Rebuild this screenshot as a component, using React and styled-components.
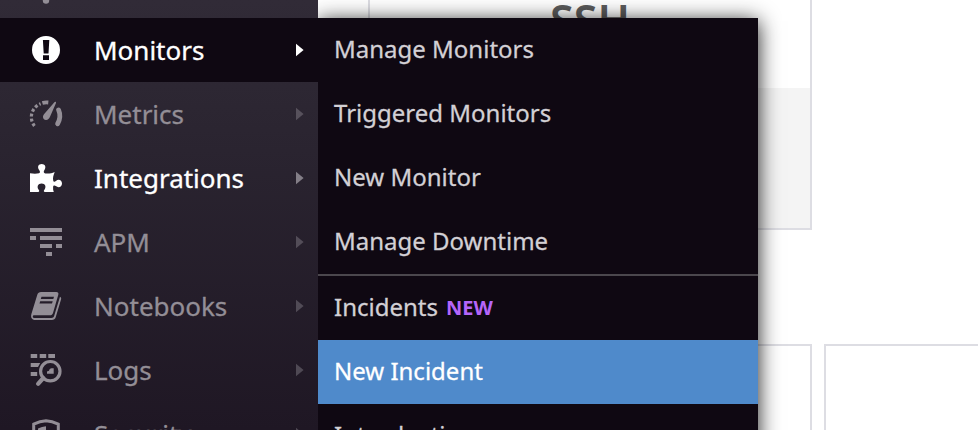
import React from "react";
import styled, { createGlobalStyle, css } from "styled-components";

const GlobalStyle = createGlobalStyle`
  *, *::before, *::after { box-sizing: border-box; }
  body { margin: 0; background: #fff; font-family: "Noto Sans", sans-serif; overflow: hidden; }
`;

const Page = styled.div`
  display: flex;
  height: 430px;
  overflow: hidden;
  position: relative;
`;

const Sidebar = styled.nav`
  position: relative;
  z-index: 3;
  width: 318px;
  flex: none;
  display: flex;
  flex-direction: column;
  justify-content: flex-start;
  overflow: hidden;
  background: linear-gradient(#312b37, #2a2430 35%, #1f1724);
`;

const NavItem = styled.a`
  flex: none;
  height: 64px;
  padding: 0 14px 0 30px;
  display: flex;
  align-items: center;
  font-size: 26px;
  line-height: 36px;
  color: ${(p) => (p.$bright ? "#fff" : "#938e96")};
  background: ${(p) => (p.$active ? "#0f0812" : "transparent")};
  ${(p) => p.$first && css`margin-top: -46px;`}
`;

const NavIcon = styled.svg`
  width: 32px;
  height: 32px;
  flex: none;
  margin-right: 32px;
  fill: currentColor;
  overflow: visible;
`;

const NavLabel = styled.span`
  flex: 1;
  white-space: nowrap;
  -webkit-text-stroke: 0.3px currentColor;
`;

const Arrow = styled.svg`
  width: 8px;
  height: 14px;
  fill: ${(p) => p.$tone};
`;

const Submenu = styled.div`
  position: absolute;
  z-index: 2;
  left: 318px;
  top: 18px;
  width: 440px;
  height: 480px;
  background: #0f0812;
  box-shadow: 0 3px 20px rgba(0, 0, 0, 0.9);
`;

const SubItem = styled.a`
  height: 64px;
  padding: 0 16px 2px;
  display: flex;
  align-items: center;
  gap: 8px;
  font-size: 24px;
  line-height: 34px;
  white-space: nowrap;
  -webkit-text-stroke: 0.27px currentColor;
  color: ${(p) => (p.$selected ? "#fff" : "#d3d0d5")};
  background: ${(p) => (p.$selected ? "#4f8acb" : "transparent")};
`;

const Divider = styled.div`
  height: 2px;
  background: #4b474d;
`;

const NewTag = styled.span`
  font-size: 20px;
  font-weight: 700;
  color: #b565fa;
  padding-top: 2px;
  -webkit-text-stroke: 0;
`;

const Content = styled.main`
  flex: none;
  width: 960px;
  padding-left: 50px;
  display: flex;
  flex-direction: column;
  gap: 114px;
`;

const CardRow = styled.div`
  display: flex;
  gap: 12px;
`;

const Card = styled.section`
  width: 444px;
  height: 230px;
  border: 2px solid #dddde3;
  ${(p) => p.$cutTop && css`border-top: 0;`}
`;

const CardTitle = styled.h2`
  margin: 0;
  height: 88px;
  font-size: 43px;
  line-height: 39px;
  font-weight: 600;
  text-align: center;
  color: #5c5c5c;
`;

const CardBody = styled.div`
  height: 140px;
  background: #f4f4f4;
`;

const ICONS = {
  top: <circle cx="16" cy="30.500" r="3.200" />,
  monitors: (
    <path
      fillRule="evenodd"
      d="M16 2a14 14 0 1 0 0 28a14 14 0 1 0 0-28ZM12.900 6h6.400l-.8 13.500h-4.800ZM13 21.200h6V26h-6Z"
    />
  ),
  metrics: (
    <>
      <path d="M24.400 4.200C24.900 3.200 26.400 3.700 26 4.900L20 18.800c-.8 2-2.300 3.300-4.200 3.100-2.300-.2-3.500-2.600-2.400-4.700.2-.5.600-.900 1-1.400Z" />
      <path d="M28.600 11.900c1.800 4.300 1.700 9.200-1 13.900" fill="none" stroke="currentColor" strokeWidth="4.800" strokeLinecap="round" />
      <path d="M4.400 27.900A14.200 14.200 0 0 1 10.600 5.800" fill="none" stroke="currentColor" strokeWidth="3.200" strokeDasharray="2.900 2.100" />
      <path d="M12.400 5c2-.6 4-.7 5.900-.5" fill="none" stroke="currentColor" strokeWidth="3.800" />
    </>
  ),
  integrations: (
    <path
      transform="translate(0 2)"
      d="M0 9.300C3.400 9.900 6.700 9.900 9 9.300c1.300-.4 1.200-1.800.3-3C6.800 2.800 8.600 0 11.700 0s5 2.800 2.600 6.300c-1 1.500-.6 2.800 1 3.100 2.700.5 6.200.1 9.400-1.300-1.400 3.500-2 5.900-1.500 8.300.3 1.500 1.500 1.600 2.700.5 2.700-2.300 6.100-.8 6.100 2.600s-3.500 5-6.200 2.600c-1.200-1-2.500-.7-2.700.8-.2 1.800.1 3.500.7 5.100H15c-1.400 0-1.500-1.100-.6-2.300 2.100-2.900 1-6.300-2.800-6.300s-5 3.500-2.900 6.400c.9 1.200.6 2.200-.6 2.200H0Z"
    />
  ),
  apm: (
    <path d="M0 2h32v4H0ZM0 10h6v4H0ZM10 10h22v4H10ZM10 18h12v4H10ZM26 18h6v4h-6ZM16 26h6v4h-6Z" />
  ),
  notebooks: (
    <path
      fillRule="evenodd"
      d="M11 2h15.300c1.700 0 2.500 1 2 2.700L23 23c-.5 1.500-1.500 2.300-3.100 2.300H4.400c-1 0-1.600.4-1.600 1.200 0 1 .8 1.500 2 1.500h16.500c1.500 0 2.500-.7 2.900-2.200L30 6.700c1 .5 1.400 1.400 1.100 2.600l-5.400 18c-.6 1.900-1.900 2.700-3.800 2.700H5.300C1.900 30 .4 27.500 1.400 24L7.300 4.700C7.900 2.900 9.200 2 11 2ZM11.500 6.700l-.7 2.200h12.500l.7-2.200ZM10.200 11.300l-.7 2.200H22l.7-2.200Z"
    />
  ),
  logs: (
    <>
      <path d="M.7 0h6.500v4H.7ZM9.700 0h6.500v4H9.700ZM18.300 0h6.700v4h-6.700ZM.7 9h9.500L8 13H.7ZM.7 18h6.500v4H.7Z" />
      <circle cx="20.300" cy="17.200" r="9.700" fill="none" stroke="currentColor" strokeWidth="3.200" />
      <path d="m13.300 24-5.200 5.800" fill="none" stroke="currentColor" strokeWidth="4.200" strokeLinecap="round" />
      <path d="M17 19.700v-2.200l2-.8c.3-1.600 1.200-2.500 2.500-2.500h2.200v5.500Z" />
    </>
  ),
  security: (
    <>
      <path d="M16 2.800Q10 3 3.700 6.200V15C3.700 23 9 28 16 30.500 23 28 28.300 23 28.300 15V6.200Q22 3 16 2.800Z" fill="none" stroke="currentColor" strokeWidth="3" />
      <path d="M8 10.500q4-2 8-2.300V25C11 23 8 20 8 15Z" />
    </>
  ),
};

const NAV = [
  { icon: "top", label: "", tone: "#57525c" },
  { icon: "monitors", label: "Monitors", tone: "#fff", active: true, bright: true },
  { icon: "metrics", label: "Metrics", tone: "#57515c" },
  { icon: "integrations", label: "Integrations", tone: "#837e87", bright: true },
  { icon: "apm", label: "APM", tone: "#534d58" },
  { icon: "notebooks", label: "Notebooks", tone: "#514b56" },
  { icon: "logs", label: "Logs", tone: "#4f4954" },
  { icon: "security", label: "Security", tone: "#4d4752" },
];

export default function App() {
  return (
    <>
      <GlobalStyle />
      <Page>
        <Sidebar>
          {NAV.map((item, i) => (
            <NavItem key={item.icon} $first={i === 0} $active={item.active} $bright={item.bright}>
              <NavIcon viewBox="0 0 32 32">{ICONS[item.icon]}</NavIcon>
              <NavLabel>{item.label}</NavLabel>
              <Arrow viewBox="0 0 8 14" $tone={item.tone}>
                <path d="M0 .8v12.400L7.600 7Z" />
              </Arrow>
            </NavItem>
          ))}
        </Sidebar>
        <Submenu>
          <SubItem>Manage Monitors</SubItem>
          <SubItem>Triggered Monitors</SubItem>
          <SubItem>New Monitor</SubItem>
          <SubItem>Manage Downtime</SubItem>
          <Divider />
          <SubItem>
            Incidents <NewTag>NEW</NewTag>
          </SubItem>
          <SubItem $selected>New Incident</SubItem>
          <SubItem>Introduction</SubItem>
        </Submenu>
        <Content>
          <CardRow>
            <Card $cutTop>
              <CardTitle>SSH</CardTitle>
              <CardBody />
            </Card>
          </CardRow>
          <CardRow>
            <Card />
            <Card />
          </CardRow>
        </Content>
      </Page>
    </>
  );
}
